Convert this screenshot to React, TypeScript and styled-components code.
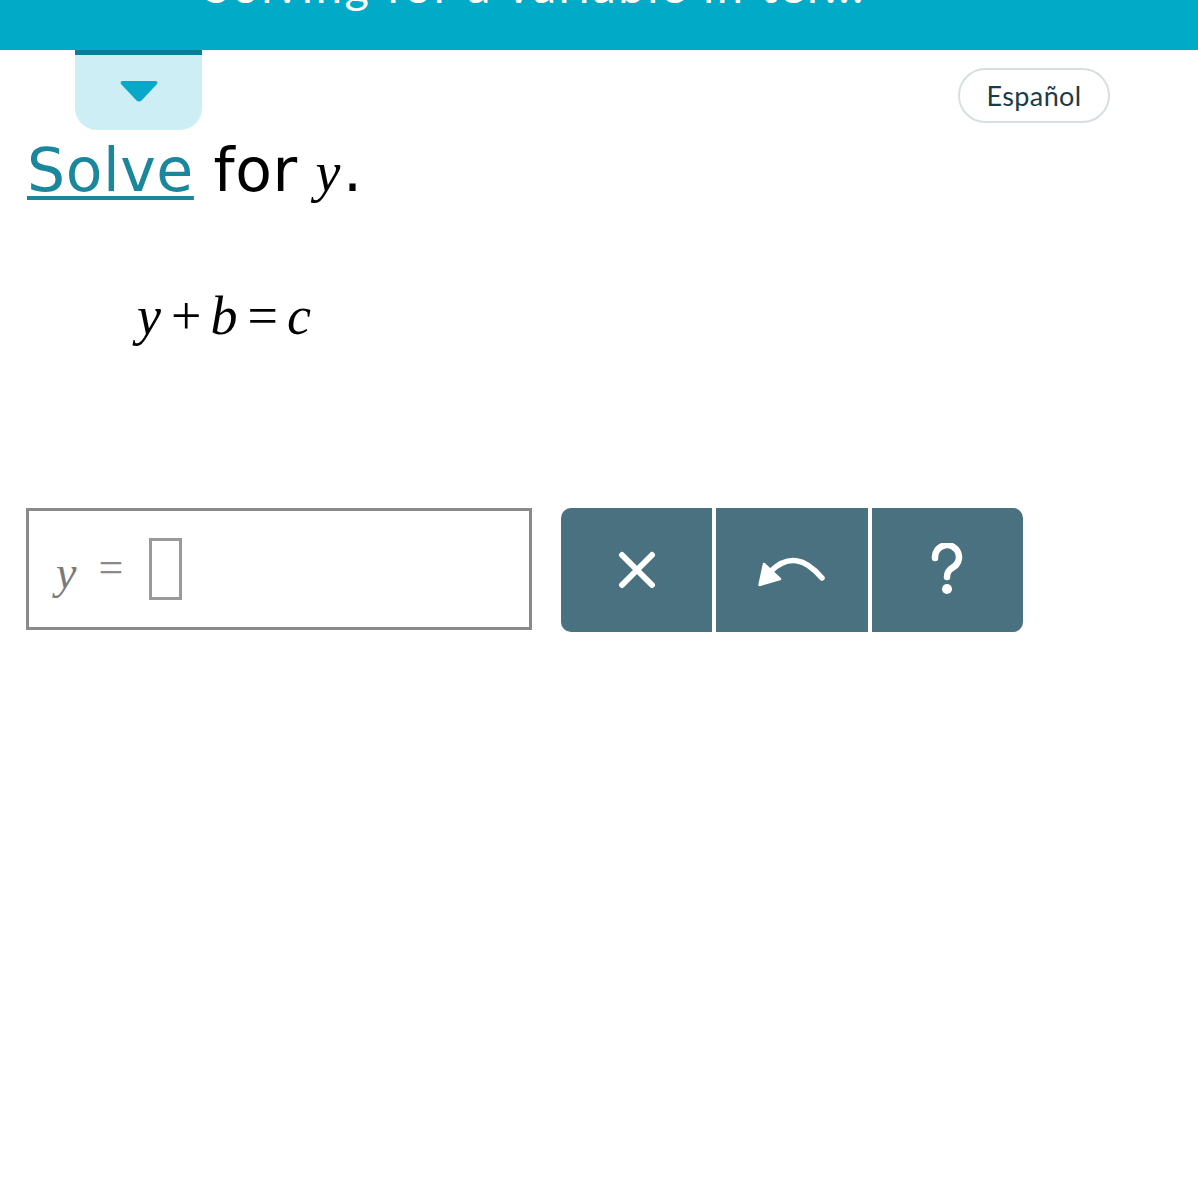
import React from 'react';
import styled, { createGlobalStyle } from 'styled-components';

const App: React.FC = () => {
  return (
    <Page>
      <GlobalStyles />
      <Header>
        <HeaderTitle>Solving for a variable in ter...</HeaderTitle>
      </Header>

      <TopRow>
        <MenuTab>
          <svg width="42" height="24" viewBox="0 0 42 24">
            <path
              d="M5 2 H37 Q41 2 38.5 5.5 L24 21 Q21 24 18 21 L3.5 5.5 Q1 2 5 2 Z"
              fill="#0aa8c8"
            />
          </svg>
        </MenuTab>
        <LangButton>Español</LangButton>
      </TopRow>

      <Prompt>
        <SolveLink>Solve</SolveLink> for <PromptVar>y</PromptVar>.
      </Prompt>

      <Equation>
        <MathVar>y</MathVar>
        <Op>+</Op>
        <MathVar>b</MathVar>
        <Op>=</Op>
        <MathVar>c</MathVar>
      </Equation>

      <AnswerRow>
        <AnswerBox>
          <AnswerVar>y</AnswerVar>
          <AnswerEq>=</AnswerEq>
          <Slot />
        </AnswerBox>

        <ToolGroup>
          <ToolButton aria-label="clear">
            <svg width="38" height="38" viewBox="0 0 38 38">
              <path d="M4 4 L34 34 M34 4 L4 34" stroke="#fff" strokeWidth="6" strokeLinecap="round" />
            </svg>
          </ToolButton>
          <Divider />
          <ToolButton aria-label="undo">
            <svg width="68" height="34" viewBox="0 0 68 34">
              <path d="M13 18 Q38 -6 64 25" stroke="#fff" strokeWidth="5.5" fill="none" strokeLinecap="round" />
              <path d="M1.5 32 L6 11 L22 26 Z" fill="#fff" stroke="#fff" strokeWidth="2.5" strokeLinejoin="round" />
            </svg>
          </ToolButton>
          <Divider />
          <ToolButton aria-label="help">
            <svg width="34" height="54" viewBox="0 0 34 54">
              <path
                d="M5 15 A12 12 0 1 1 22 25 Q17 28 17 34"
                stroke="#fff"
                strokeWidth="6.5"
                fill="none"
                strokeLinecap="round"
              />
              <circle cx="17" cy="46" r="5" fill="#fff" />
            </svg>
          </ToolButton>
        </ToolGroup>
      </AnswerRow>
    </Page>
  );
};

const GlobalStyles = createGlobalStyle`
  body {
    margin: 0;
    background: #fff;
    font-family: "DejaVu Sans", Verdana, sans-serif;
  }
`;

const Page = styled.div`
  width: 1198px;
  min-height: 1200px;
  background: #fff;
`;

const Header = styled.div`
  height: 50px;
  background: #01abc8;
  overflow: hidden;
  padding-left: 204px;
`;

const HeaderTitle = styled.div`
  margin-top: -38px;
  font-family: "Lato", "Open Sans", sans-serif;
  font-size: 47px;
  line-height: 46px;
  color: #fff;
  letter-spacing: 2.6px;
  white-space: nowrap;
`;

const TopRow = styled.div`
  display: flex;
  justify-content: space-between;
  align-items: flex-start;
  padding: 0 88px 0 75px;
  height: 80px;
`;

const MenuTab = styled.div`
  width: 127px;
  height: 80px;
  box-sizing: border-box;
  background: #cdeef4;
  border-top: 5px solid #0b7d96;
  border-radius: 0 0 22px 22px;
  display: flex;
  justify-content: center;
  padding-top: 24px;
`;

const LangButton = styled.button`
  margin-top: 18px;
  width: 152px;
  height: 55px;
  border: 2px solid #d8dee1;
  border-radius: 28px;
  background: #fff;
  font-family: "Lato", "Open Sans", sans-serif;
  font-size: 27px;
  letter-spacing: 0.4px;
  color: #1c3b48;
  padding: 0;
`;

const Prompt = styled.div`
  margin-top: 4px;
  padding-left: 27px;
  font-size: 60px;
  line-height: 72px;
  letter-spacing: 0.6px;
  color: #000;
`;

const SolveLink = styled.span`
  color: #1a879d;
  text-decoration: underline;
  text-decoration-thickness: 4px;
  text-underline-offset: 5px;
`;

const MathVar = styled.span`
  font-family: "Liberation Serif", "Times New Roman", serif;
  font-style: italic;
`;

const PromptVar = styled(MathVar)`
  font-size: 56px;
  margin-left: -2px;
  margin-right: 2px;
`;

const Equation = styled.div`
  margin-top: 78px;
  padding-left: 137px;
  font-family: "Liberation Serif", "Times New Roman", serif;
  font-size: 54px;
  line-height: 60px;
  color: #000;
`;

const Op = styled.span`
  margin: 0 9px 0 10px;
`;

const AnswerRow = styled.div`
  margin-top: 162px;
  display: flex;
  align-items: flex-start;
  gap: 29px;
  padding-left: 26px;
`;

const AnswerBox = styled.div`
  width: 506px;
  height: 122px;
  box-sizing: border-box;
  border: 3px solid #8a8a8a;
  display: flex;
  align-items: center;
  padding-left: 27px;
  color: #7a7a7a;
`;

const AnswerVar = styled.span`
  font-family: "Liberation Serif", "Times New Roman", serif;
  font-style: italic;
  font-size: 46px;
  margin-top: 6px;
`;

const AnswerEq = styled.span`
  font-family: "Liberation Serif", "Times New Roman", serif;
  font-size: 44px;
  margin-left: 22px;
  margin-top: -4px;
  color: #8a8a8a;
`;

const Slot = styled.span`
  display: inline-block;
  width: 33px;
  height: 62px;
  box-sizing: border-box;
  border: 3px solid #9a9a9a;
  margin-left: 26px;
`;

const ToolGroup = styled.div`
  display: flex;
  width: 462px;
  height: 124px;
  background: #49717f;
  border-radius: 10px;
  overflow: hidden;
`;

const ToolButton = styled.button`
  flex: 1;
  border: none;
  background: transparent;
  display: flex;
  align-items: center;
  justify-content: center;
  padding: 0;
`;

const Divider = styled.div`
  width: 4px;
  background: #fff;
`;

export default App;
